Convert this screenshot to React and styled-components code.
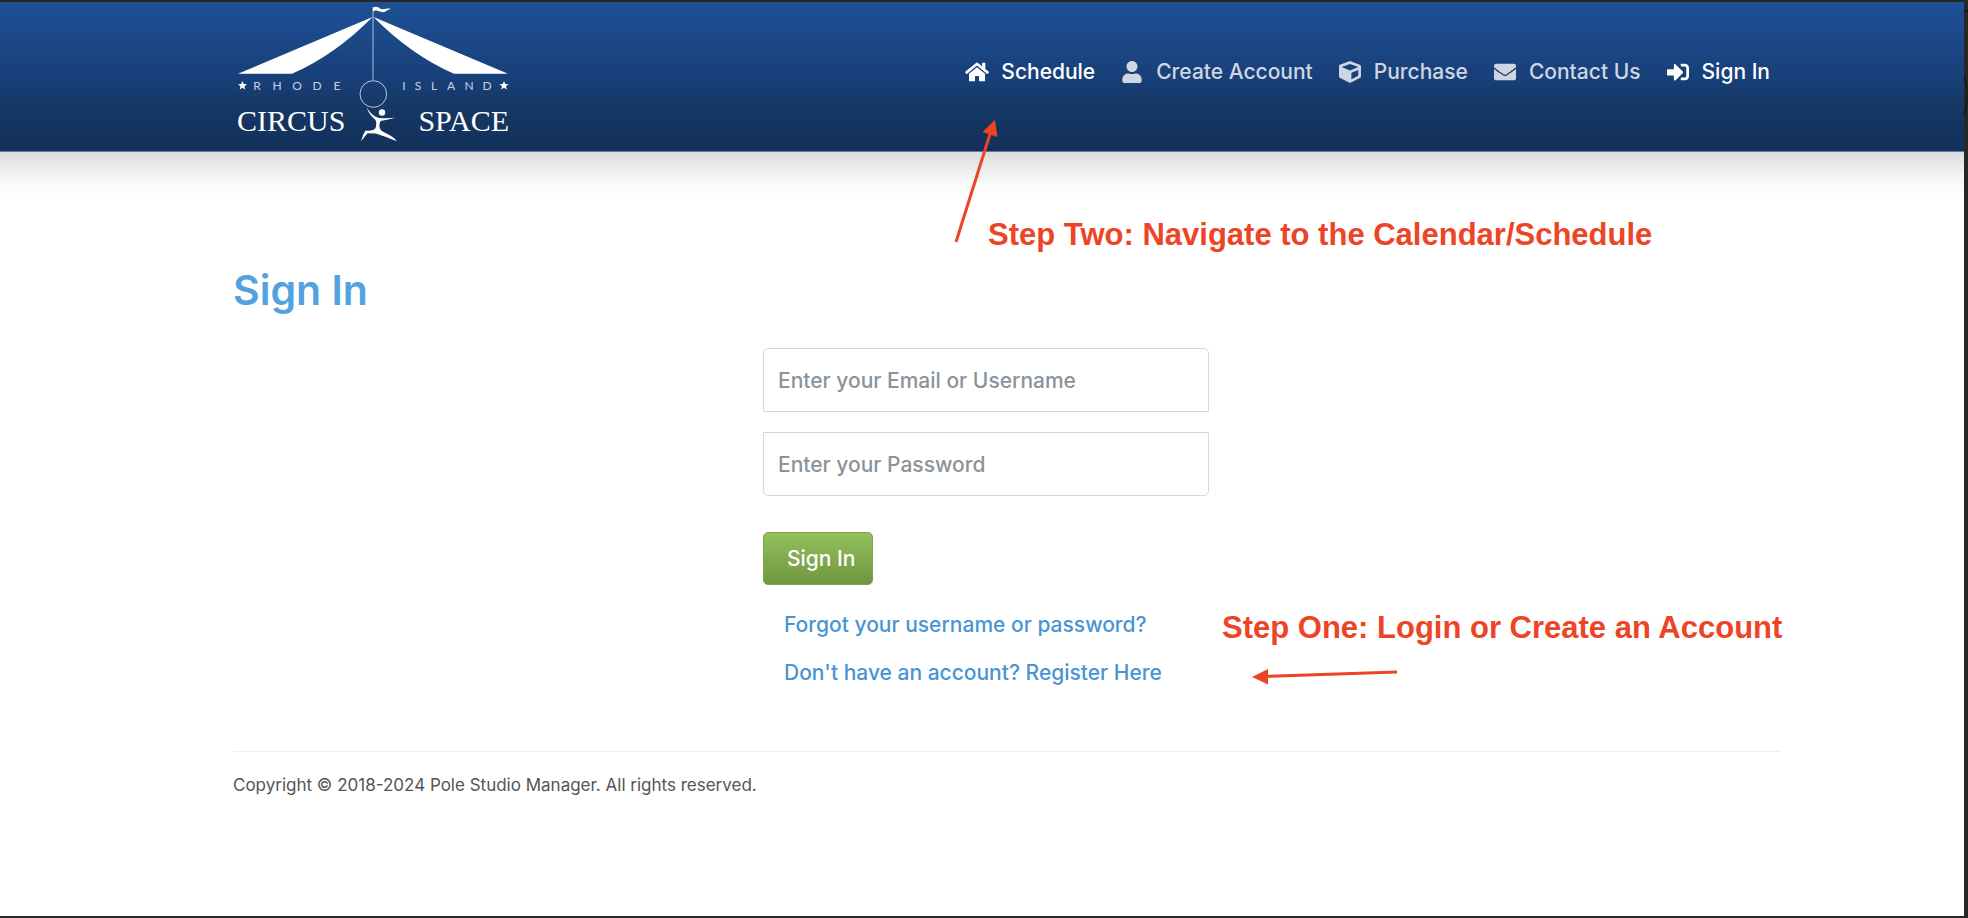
import React, { useState } from 'react';
import styled, { createGlobalStyle } from 'styled-components';
import { FaHome, FaUser, FaCube, FaEnvelope, FaSignInAlt } from 'react-icons/fa';

const GlobalStyle = createGlobalStyle`
* {
    box-sizing: border-box;
}

body {
    margin: 0;
    background: #272726;
    font-family: Inter, Roboto, sans-serif;
    font-size: 21px;
    font-weight: 500;
    line-height: 32px;
    color: #555;
}

a {
    text-decoration: none;
}
`

const Frame = styled.div`
    position: relative;
    padding: 2px 4px 2px 0;
`

const FrameEdge = styled.svg`
    position: absolute;
    top: 0;
    right: 0;
    width: 4px;
    height: 120px;
`

const Page = styled.div`
    position: relative;
    min-height: calc(100vh - 4px);
    background: #fff;
    overflow: hidden;
`

const Header = styled.header`
    display: flex;
    justify-content: space-between;
    align-items: flex-start;
    padding: 0 194px 0 233px;
    background: linear-gradient(#1e5096, #183f78 52%, #153763 72%, #12305c);
    border-bottom: 1px solid #64799c;
    box-shadow: 0 -24px 40px 30px rgba(0, 0, 0, .24);
`

const Brand = styled.a`
    display: block;
    height: 149px;
    color: #fff;

    svg {
        display: block;
        width: 280px;
        height: 149px;
    }
`

const Nav = styled.nav`
    display: flex;
    gap: 25px;
    padding-top: 54px;
`

const NavLink = styled.a`
    display: flex;
    align-items: center;
    gap: 12px;
    color: ${props => props.$active ? '#fff' : '#ced6e2'};

    svg {
        width: 24px;
        height: 22px;
    }
`

const Main = styled.main`
    padding: 110px 183px 0 233px;
`

const Title = styled.h1`
    margin: 0;
    font-size: 41px;
    font-weight: 600;
    line-height: 56px;
    color: #52a2e2;
`

const Form = styled.form`
    display: flex;
    flex-direction: column;
    align-items: flex-start;
    width: 446px;
    margin: 30px 0 0 530px;
`

const Input = styled.input`
    width: 100%;
    height: 64px;
    margin-bottom: 20px;
    padding: 0 14px;
    border: 1px solid #d3d8e0;
    border-radius: ${props => props.$last ? '0 0 5px 5px' : '5px 5px 0 0'};
    font: inherit;
    color: #495057;

    &::placeholder {
        color: #8a939b;
        opacity: 1;
    }
`

const Submit = styled.button`
    height: 53px;
    margin: 16px 0 24px;
    padding: 0 17px 0 23px;
    border: 1px solid #7ba546;
    border-radius: 5px;
    background: linear-gradient(#94c05c, #70963f);
    color: #fff;
    font: inherit;
`

const FormLink = styled.a`
    margin: 0 0 16px 21px;
    color: #4795d3;
    white-space: nowrap;
`

const Footer = styled.footer`
    margin-top: 46px;
    padding-top: 17px;
    border-top: 1px solid #eee;
    font-size: 17px;
    font-weight: 400;
`

// Notes that lie over the page
const Note = styled.p`
    position: absolute;
    top: ${props => props.$top}px;
    left: ${props => props.$left}px;
    margin: 0;
    font-family: "Liberation Sans", Arial, sans-serif;
    font-size: 31px;
    font-weight: bold;
    line-height: 40px;
    color: #ee4426;
    white-space: nowrap;
`

const Arrows = styled.svg`
    position: absolute;
    top: 0;
    left: 0;
    width: 1964px;
    height: 914px;
    pointer-events: none;
`

const links = [
    { text: 'Schedule', Icon: FaHome, active: true },
    { text: 'Create Account', Icon: FaUser },
    { text: 'Purchase', Icon: FaCube },
    { text: 'Contact Us', Icon: FaEnvelope },
    { text: 'Sign In', Icon: FaSignInAlt, active: true },
]

const topLetters = [
    ['R', 24], ['H', 44], ['O', 64], ['D', 84], ['E', 104],
    ['I', 171], ['S', 185], ['L', 201], ['A', 218], ['N', 236], ['D', 254],
]

const star = 'M0-4.6L1.3-1.5 4.5-1.3 2 .8 2.8 4 0 2.2-2.8 4-2 .8-4.5-1.3-1.3-1.5z'

const Logo = () => (
    <svg viewBox='0 0 280 149' fill='currentColor' role='img' aria-label='Rhode Island Circus Space'>
        <path d='M139.500 15L5 71.800H59Q102 53 139.500 15z' />
        <path d='M140.500 15L275 71.800H221Q178 53 140.500 15z' />
        <path d='M140 5.500C143 4 145 5 147 6.500S153 6.500 157.500 6.500C156 8 154 8 152.500 9.500S146 9.500 144.500 8.800 142 8.500 140 9.500z' />
        <path d='M140 5V78' stroke='currentColor' strokeOpacity='.65' fill='none' />
        <circle cx='140.300' cy='92' r='13.300' fill='none' stroke='currentColor' strokeOpacity='.7' />
        <path d={star} transform='translate(9.500 83.500)' />
        <path d={star} transform='translate(271 83.500)' />

        <g fontFamily='Lato, sans-serif' fontSize='12' fontWeight='400' textAnchor='middle' opacity='.75'>
            {topLetters.map(([letter, x]) => (
                <text key={x} x={x} y='87.500'>{letter}</text>
            ))}
        </g>

        <g fontFamily='"Liberation Serif", serif' fontSize='30' fontWeight='400'>
            <text x='4' y='129'>CIRCUS</text>
            <text x='276' y='129' textAnchor='end'>SPACE</text>
        </g>

        {/* acrobat under the hoop */}
        <circle cx='149' cy='110.500' r='3.200' />
        <path d='M133.500 105C137 111 141 114.500 146 116Q154 116.500 162.500 115.800Q155 117.500 147.500 119Q145 124 148 128.500C154 132 160 134 164 139.300C157 136.500 149 133.500 143 131.500L134.500 131.200 128 139.300Q129.500 133 132.500 128.500Q140 129.500 142.500 126Q144 121 142.500 118C138.500 114.500 135 110.500 133.500 105z' />
    </svg>
)

const App = () => {

    const [login, setLogin] = useState('')
    const [password, setPassword] = useState('')

    const signIn = (e) => {
        e.preventDefault()
    }

    return (
        <Frame>
            <GlobalStyle />
            <FrameEdge viewBox='0 0 4 120'>
                <path d='M0 11H4' stroke='#181818' strokeWidth='2' />
                <path d='M0 76Q6 95 0 116' stroke='#0b1513' fill='none' />
            </FrameEdge>

            <Page>
                <Header>
                    <Brand href='#'><Logo /></Brand>
                    <Nav>
                        {links.map(({ text, Icon, active }) => (
                            <NavLink key={text} href='#' $active={active}>
                                <Icon />
                                {text}
                            </NavLink>
                        ))}
                    </Nav>
                </Header>

                <Main>
                    <Title>Sign In</Title>
                    <Form onSubmit={signIn}>
                        <Input
                            type='text'
                            aria-label='Enter your Email or Username'
                            placeholder='Enter your Email or Username'
                            value={login}
                            onChange={(e) => setLogin(e.target.value)}
                        />
                        <Input
                            $last
                            type='password'
                            aria-label='Enter your Password'
                            placeholder='Enter your Password'
                            value={password}
                            onChange={(e) => setPassword(e.target.value)}
                        />
                        <Submit type='submit'>Sign In</Submit>
                        <FormLink href='#'>Forgot your username or password?</FormLink>
                        <FormLink href='#'>Don't have an account? Register Here</FormLink>
                    </Form>
                    <Footer>Copyright © 2018-2024 Pole Studio Manager. All rights reserved.</Footer>
                </Main>

                <Note $top={213} $left={988}>Step Two: Navigate to the Calendar/Schedule</Note>
                <Note $top={606} $left={1222}>Step One: Login or Create an Account</Note>
                <Arrows viewBox='0 0 1964 914' fill='#ee4426' stroke='#ee4426'>
                    <path d='M956 240L990 132' strokeWidth='3' />
                    <path d='M995 118L997.500 135 982.500 130z' stroke='none' />
                    <path d='M1397 670L1265 674.500' strokeWidth='3' />
                    <path d='M1252 675L1268 667V682.500z' stroke='none' />
                </Arrows>
            </Page>
        </Frame>
    )
}

export default App;
